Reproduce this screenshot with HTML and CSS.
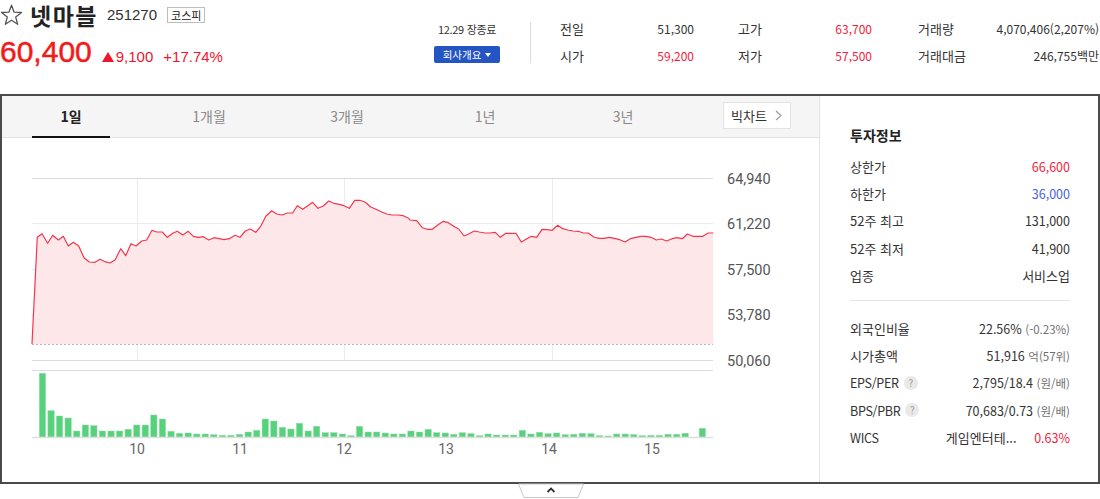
FILE: index.html
```html
<!DOCTYPE html>
<html lang="ko">
<head>
<meta charset="utf-8">
<title>넷마블 251270</title>
<link rel="stylesheet" href="styles.css">
</head>
<body>
<header class="top">
  <div class="stock">
    <div class="title-row">
      <svg class="star" width="23" height="22" viewBox="0 0 23 22"><polygon points="11.5,1.2 14.1,8.2 21.5,8.5 15.7,13.1 17.7,20.3 11.5,16.2 5.3,20.3 7.3,13.1 1.5,8.5 8.9,8.2" fill="none" stroke="#555" stroke-width="1.3" stroke-linejoin="round"/></svg>
      <h1 class="name">넷마블</h1>
      <span class="code">251270</span>
      <span class="market">코스피</span>
    </div>
    <div class="price-row">
      <span class="price">60,400</span>
      <span class="change"><svg class="up" width="12" height="10" viewBox="0 0 12 10"><polygon points="6,0 12,10 0,10" fill="#f0142d"/></svg>9,100</span>
      <span class="rate">+17.74%</span>
    </div>
  </div>
  <div class="status">
    <div class="closed">12.29 장종료</div>
    <button class="company">회사개요 <svg width="6" height="4" viewBox="0 0 6 4"><polygon points="0,0 6,0 3,4" fill="#fff"/></svg></button>
  </div>
  <div class="vdivider"></div>
  <div class="quotes">
    <span class="q-label">전일</span><span class="q-val">51,300</span>
    <span class="q-label gap">고가</span><span class="q-val red">63,700</span>
    <span class="q-label gap2">거래량</span><span class="q-val">4,070,406(2,207%)</span>
    <span class="q-label">시가</span><span class="q-val red">59,200</span>
    <span class="q-label gap">저가</span><span class="q-val red">57,500</span>
    <span class="q-label gap2">거래대금</span><span class="q-val">246,755백만</span>
  </div>
</header>

<section class="board">
  <div class="chart-col">
    <nav class="tabs">
      <a class="tab active">1일</a>
      <a class="tab">1개월</a>
      <a class="tab">3개월</a>
      <a class="tab">1년</a>
      <a class="tab">3년</a>
      <a class="bigchart">빅차트 <svg width="7" height="11" viewBox="0 0 7 11"><polyline points="1,1 6,5.5 1,10" fill="none" stroke="#999" stroke-width="1.1"/></svg></a>
    </nav>
    <svg class="chart" width="817" height="344" viewBox="2 138 817 344">
      <g class="grid-soft">
        <line x1="32" y1="223.5" x2="713" y2="223.5"/>
        <line x1="32" y1="269.5" x2="713" y2="269.5"/>
        <line x1="32" y1="314.5" x2="713" y2="314.5"/>
        <line x1="137.5" y1="178" x2="137.5" y2="360"/>
        <line x1="344.5" y1="178" x2="344.5" y2="360"/>
        <line x1="552.5" y1="178" x2="552.5" y2="360"/>
      </g>
      <polygon class="area" points="32,344 37.3,237.3 42,233.7 47.7,243.3 52.7,235.3 58.3,240 63.3,236.3 68.3,246 73.3,242.3 78.7,246 84,257.7 89.3,262 95,262.3 100,259.3 105,261.7 110,263 115,260 120.7,248.7 125.7,255.7 131,243.7 136,246 141.7,241 146.7,240 152,230.3 156.7,232 162.3,232 167.3,237.3 172.7,233.3 177.3,231.3 182.7,235 188.3,231.3 193.3,236.3 198.3,237.3 203.3,236.7 208.7,240 214,237.7 219,238.7 224,239.7 229.3,238.7 235,235.3 240,237.3 245.3,231 250.3,229 255.7,232.3 260.7,226.3 266,216 271.7,210.7 276.7,214 282,215 287.3,213 292.7,213 297.3,205.7 302.7,209.3 307.7,205.7 312.7,202.3 318,208.3 323.3,206 328.7,201 334,203.3 339.3,204.3 344,205.7 349.3,208.3 354.7,200.3 360,200.3 365.3,202.3 370.7,207 376,209.3 381.3,211.7 386.7,214 392,215 398,215 403.3,215.7 408.7,218.3 410,220 416.7,220.7 422.3,227.7 427.3,229.3 432.3,229.3 437.7,225 443.3,221.3 448.3,222.7 453.7,226.3 458.7,229 464,236 469,233.7 474.3,231 479.3,232 485,233 490,233 495.3,232.3 500.3,237.3 505.7,233.3 510.7,233.3 516,233.3 521.3,242 526,239.3 531.3,236.3 536.7,237.3 542,229.3 547,229.7 552.3,230.3 557.7,225.3 562.7,228.7 567.7,230 573,231 578.3,231.3 583.3,233 588.3,233 593.7,237 599,238.3 604,238.3 609.3,237.3 614.3,238.3 619.7,239.7 625,242 630.3,238.7 635.7,237.3 640.7,236.3 646,236.3 651,237.3 656.3,240 661.3,239 666.7,241 672,238.7 677,237.7 682.3,238.7 687.3,234 692.7,236.3 697.7,236.3 703,236.3 708,233 713.3,233 713.3,344"/>
      <line class="grid-edge" x1="32" y1="178.5" x2="713" y2="178.5"/>
      <line class="grid-edge" x1="32" y1="360.5" x2="713" y2="360.5"/>
      <line class="prev" x1="32" y1="344.5" x2="713" y2="344.5"/>
      <polyline class="line" points="32,344 37.3,237.3 42,233.7 47.7,243.3 52.7,235.3 58.3,240 63.3,236.3 68.3,246 73.3,242.3 78.7,246 84,257.7 89.3,262 95,262.3 100,259.3 105,261.7 110,263 115,260 120.7,248.7 125.7,255.7 131,243.7 136,246 141.7,241 146.7,240 152,230.3 156.7,232 162.3,232 167.3,237.3 172.7,233.3 177.3,231.3 182.7,235 188.3,231.3 193.3,236.3 198.3,237.3 203.3,236.7 208.7,240 214,237.7 219,238.7 224,239.7 229.3,238.7 235,235.3 240,237.3 245.3,231 250.3,229 255.7,232.3 260.7,226.3 266,216 271.7,210.7 276.7,214 282,215 287.3,213 292.7,213 297.3,205.7 302.7,209.3 307.7,205.7 312.7,202.3 318,208.3 323.3,206 328.7,201 334,203.3 339.3,204.3 344,205.7 349.3,208.3 354.7,200.3 360,200.3 365.3,202.3 370.7,207 376,209.3 381.3,211.7 386.7,214 392,215 398,215 403.3,215.7 408.7,218.3 410,220 416.7,220.7 422.3,227.7 427.3,229.3 432.3,229.3 437.7,225 443.3,221.3 448.3,222.7 453.7,226.3 458.7,229 464,236 469,233.7 474.3,231 479.3,232 485,233 490,233 495.3,232.3 500.3,237.3 505.7,233.3 510.7,233.3 516,233.3 521.3,242 526,239.3 531.3,236.3 536.7,237.3 542,229.3 547,229.7 552.3,230.3 557.7,225.3 562.7,228.7 567.7,230 573,231 578.3,231.3 583.3,233 588.3,233 593.7,237 599,238.3 604,238.3 609.3,237.3 614.3,238.3 619.7,239.7 625,242 630.3,238.7 635.7,237.3 640.7,236.3 646,236.3 651,237.3 656.3,240 661.3,239 666.7,241 672,238.7 677,237.7 682.3,238.7 687.3,234 692.7,236.3 697.7,236.3 703,236.3 708,233 713.3,233"/>
      <g class="axis">
        <text x="727" y="184">64,940</text>
        <text x="727" y="229">61,220</text>
        <text x="727" y="275">57,500</text>
        <text x="727" y="320">53,780</text>
        <text x="727" y="366">50,060</text>
      </g>
      <line class="vol-top" x1="32" y1="370.5" x2="713" y2="370.5"/>
      <g class="bars">
        <rect x="39.3" y="373.3" width="6.3" height="63.7"/>
        <rect x="47.9" y="410.7" width="6.3" height="26.3"/>
        <rect x="56.4" y="416" width="6.3" height="21"/>
        <rect x="65" y="418" width="6.3" height="19"/>
        <rect x="73.6" y="431" width="6.3" height="6"/>
        <rect x="82.2" y="425" width="6.3" height="12"/>
        <rect x="90.7" y="425.7" width="6.3" height="11.3"/>
        <rect x="99.3" y="431" width="6.3" height="6"/>
        <rect x="107.9" y="431" width="6.3" height="6"/>
        <rect x="116.4" y="431" width="6.3" height="6"/>
        <rect x="125" y="429.3" width="6.3" height="7.7"/>
        <rect x="133.6" y="425" width="6.3" height="12"/>
        <rect x="142.1" y="425" width="6.3" height="12"/>
        <rect x="150.7" y="415" width="6.3" height="22"/>
        <rect x="159.3" y="419" width="6.3" height="18"/>
        <rect x="167.9" y="431.3" width="6.3" height="5.7"/>
        <rect x="176.4" y="433.3" width="6.3" height="3.7"/>
        <rect x="185" y="433" width="6.3" height="4"/>
        <rect x="193.6" y="434" width="6.3" height="3"/>
        <rect x="202.1" y="434" width="6.3" height="3"/>
        <rect x="210.7" y="434.7" width="6.3" height="2.3"/>
        <rect x="219.3" y="435.3" width="6.3" height="1.7"/>
        <rect x="227.8" y="435.3" width="6.3" height="1.7"/>
        <rect x="236.4" y="434.3" width="6.3" height="2.7"/>
        <rect x="245" y="432" width="6.3" height="5"/>
        <rect x="253.6" y="430.3" width="6.3" height="6.7"/>
        <rect x="262.1" y="419" width="6.3" height="18"/>
        <rect x="270.7" y="421" width="6.3" height="16"/>
        <rect x="279.3" y="427.3" width="6.3" height="9.7"/>
        <rect x="287.8" y="429" width="6.3" height="8"/>
        <rect x="296.4" y="423.3" width="6.3" height="13.7"/>
        <rect x="305" y="431" width="6.3" height="6"/>
        <rect x="313.5" y="426.3" width="6.3" height="10.7"/>
        <rect x="322.1" y="432.7" width="6.3" height="4.3"/>
        <rect x="330.7" y="432.7" width="6.3" height="4.3"/>
        <rect x="339.3" y="434" width="6.3" height="3"/>
        <rect x="347.8" y="435.7" width="6.3" height="1.3"/>
        <rect x="356.4" y="426.3" width="6.3" height="10.7"/>
        <rect x="365" y="432" width="6.3" height="5"/>
        <rect x="373.5" y="432" width="6.3" height="5"/>
        <rect x="382.1" y="433" width="6.3" height="4"/>
        <rect x="390.7" y="434" width="6.3" height="3"/>
        <rect x="399.2" y="434" width="6.3" height="3"/>
        <rect x="407.8" y="431" width="6.3" height="6"/>
        <rect x="416.4" y="432" width="6.3" height="5"/>
        <rect x="425" y="429.3" width="6.3" height="7.7"/>
        <rect x="433.5" y="432.7" width="6.3" height="4.3"/>
        <rect x="442.1" y="433" width="6.3" height="4"/>
        <rect x="450.7" y="434.3" width="6.3" height="2.7"/>
        <rect x="459.2" y="432.7" width="6.3" height="4.3"/>
        <rect x="467.8" y="433.7" width="6.3" height="3.3"/>
        <rect x="476.4" y="435.7" width="6.3" height="1.3"/>
        <rect x="484.9" y="434" width="6.3" height="3"/>
        <rect x="493.5" y="435" width="6.3" height="2"/>
        <rect x="502.1" y="435" width="6.3" height="2"/>
        <rect x="510.6" y="435" width="6.3" height="2"/>
        <rect x="519.2" y="430.3" width="6.3" height="6.7"/>
        <rect x="527.8" y="434" width="6.3" height="3"/>
        <rect x="536.4" y="432.3" width="6.3" height="4.7"/>
        <rect x="544.9" y="433.7" width="6.3" height="3.3"/>
        <rect x="553.5" y="433" width="6.3" height="4"/>
        <rect x="562.1" y="434.7" width="6.3" height="2.3"/>
        <rect x="570.6" y="434.3" width="6.3" height="2.7"/>
        <rect x="579.2" y="433.3" width="6.3" height="3.7"/>
        <rect x="587.8" y="433.7" width="6.3" height="3.3"/>
        <rect x="596.3" y="435.7" width="6.3" height="1.3"/>
        <rect x="604.9" y="436" width="6.3" height="1"/>
        <rect x="613.5" y="434" width="6.3" height="3"/>
        <rect x="622.1" y="434" width="6.3" height="3"/>
        <rect x="630.6" y="434.7" width="6.3" height="2.3"/>
        <rect x="639.2" y="435.7" width="6.3" height="1.3"/>
        <rect x="647.8" y="435.3" width="6.3" height="1.7"/>
        <rect x="656.3" y="435.3" width="6.3" height="1.7"/>
        <rect x="664.9" y="434.3" width="6.3" height="2.7"/>
        <rect x="673.5" y="434.3" width="6.3" height="2.7"/>
        <rect x="682" y="433.3" width="6.3" height="3.7"/>
        <rect x="699.2" y="428.3" width="6.3" height="8.7"/>
      </g>
      <line class="vol-base" x1="32" y1="437.5" x2="713" y2="437.5"/>
      <g class="axis xaxis">
        <text x="137" y="454">10</text>
        <text x="240" y="454">11</text>
        <text x="344" y="454">12</text>
        <text x="446" y="454">13</text>
        <text x="549" y="454">14</text>
        <text x="652" y="454">15</text>
      </g>
    </svg>
  </div>

  <aside class="info">
    <h2 class="info-title">투자정보</h2>
    <ul class="info-list">
      <li><span>상한가</span><span class="num red">66,600</span></li>
      <li><span>하한가</span><span class="num blue">36,000</span></li>
      <li><span>52주 최고</span><span class="num">131,000</span></li>
      <li><span>52주 최저</span><span class="num">41,900</span></li>
      <li><span>업종</span><span>서비스업</span></li>
    </ul>
    <ul class="info-list second">
      <li><span>외국인비율</span><span class="num">22.56% <small>(-0.23%)</small></span></li>
      <li><span>시가총액</span><span class="num">51,916 <small>억(57위)</small></span></li>
      <li><span class="eng">EPS/PER <i class="help">?</i></span><span class="num">2,795/18.4 <small>(원/배)</small></span></li>
      <li><span class="eng">BPS/PBR <i class="help">?</i></span><span class="num">70,683/0.73 <small>(원/배)</small></span></li>
      <li><span class="eng">WICS</span><span class="wics">게임엔터테... <span class="num red">0.63%</span></span></li>
    </ul>
  </aside>

  <div class="handle"><svg width="66" height="15" viewBox="0 0 66 15"><polygon points="0.5,1 65.5,1 60,14.5 6,14.5" fill="#fff" stroke="#c9c9c9"/><polyline points="29.5,9 33,5.5 36.5,9" fill="none" stroke="#333" stroke-width="1.8"/></svg></div>
</section>
</body>
</html>
```

FILE: styles.css
```css
* { box-sizing: border-box; }
html, body { margin: 0; padding: 0; }
body {
  width: 1100px;
  min-height: 499px;
  font-family: "Noto Sans CJK KR", "Liberation Sans", sans-serif;
  color: #333;
  background: #fff;
}

/* header */
.top {
  display: flex;
  height: 94px;
}
.stock { width: 434px; }
.title-row {
  display: flex;
  align-items: center;
  height: 30px;
}
.star { display: block; }
.name {
  margin: 0 0 0 7px;
  font-size: 23px;
  font-weight: bold;
  letter-spacing: 1.5px;
  line-height: 30px;
  color: #222;
}
.code {
  margin-left: 9px;
  font-family: "Liberation Sans", sans-serif;
  font-size: 15px;
  color: #333;
  line-height: 30px;
}
.market {
  margin-left: 10px;
  height: 16px;
  padding: 0 3px;
  border: 1px solid #bdbdbd;
  font-size: 11px;
  line-height: 14px;
  color: #222;
}
.price-row {
  display: flex;
  align-items: baseline;
  height: 44px;
  line-height: 44px;
}
.price {
  font-family: "Liberation Sans", sans-serif;
  font-size: 30px;
  color: #f21b1b;
  -webkit-text-stroke: 0.5px #f21b1b;
}
.change, .rate {
  font-family: "Liberation Sans", sans-serif;
  font-size: 15px;
  color: #f0142d;
}
.change { margin-left: 10px; }
.change .up { margin-right: 2px; vertical-align: 0; }
.rate { margin-left: 10px; }

.status {
  width: 66px;
  padding-top: 22px;
  text-align: center;
}
.closed {
  font-size: 11px;
  line-height: 14px;
  color: #333;
  letter-spacing: -0.3px;
  white-space: nowrap;
}
.company {
  display: flex;
  align-items: center;
  justify-content: center;
  gap: 4px;
  width: 66px;
  height: 17px;
  margin-top: 10px;
  padding: 0;
  border: 0;
  border-radius: 2px;
  background: #2455c3;
  color: #fff;
  font-family: "Noto Sans CJK KR", sans-serif;
  font-size: 10.5px;
  line-height: 17px;
}
.vdivider {
  width: 1px;
  height: 41px;
  margin: 22px 0 0 30px;
  background: #dcdcdc;
}
.quotes {
  display: grid;
  grid-template-columns: 60px 74px 104px 74px 106px 121px;
  grid-auto-rows: 27px;
  align-items: center;
  margin: 15px 0 0 29px;
  font-size: 13px;
  height: 54px;
}
.q-label { color: #333; white-space: nowrap; }
.q-label.gap { padding-left: 44px; }
.q-label.gap2 { padding-left: 46px; }
.q-val {
  text-align: right;
  font-size: 12px;
  color: #333;
  white-space: nowrap;
}
.red { color: #f3213b; }
.blue { color: #4a62dd; }

/* board */
.board {
  position: relative;
  display: flex;
  height: 390px;
  border: 2px solid #4a4a4a;
}
.chart-col {
  width: 818px;
  border-right: 1px solid #e3e3e3;
}
.tabs {
  display: flex;
  height: 42px;
  background: #f5f5f5;
  border-bottom: 1px solid #e3e3e3;
}
.tab {
  position: relative;
  width: 138px;
  text-align: center;
  font-size: 14px;
  line-height: 41px;
  color: #8a8a8a;
}
.tab.active {
  color: #222;
  font-weight: bold;
}
.tab.active::after {
  content: "";
  position: absolute;
  left: 30px;
  right: 30px;
  bottom: -1px;
  height: 2px;
  background: #111;
}
.bigchart {
  display: flex;
  align-items: center;
  gap: 8px;
  height: 27px;
  margin: 6px 0 0 31px;
  padding: 0 8px 0 7px;
  background: #fff;
  border: 1px solid #e3e3e3;
  font-size: 13px;
  color: #333;
}
.chart { display: block; }
.grid-soft line { stroke: #ececec; stroke-width: 1; }
.grid-edge { stroke: #d6dce4; stroke-width: 1; }
.area { fill: #fde7e9; }
.line { fill: none; stroke: #f3364b; stroke-width: 1.2; stroke-linejoin: round; }
.prev { stroke: #b9b6c2; stroke-width: 1; stroke-dasharray: 2 2; }
.axis text {
  font-family: Roboto, "Liberation Sans", sans-serif;
  font-size: 14.5px;
  fill: #555;
}
.xaxis text { text-anchor: middle; fill: #666; font-size: 14px; }
.vol-top { stroke: #dddbea; stroke-width: 1; }
.vol-base { stroke: #dedede; stroke-width: 1.5; }
.bars rect { fill: #58d17c; stroke: #8ee0a6; stroke-width: 0.5; }

/* info */
.info {
  flex: 1;
  padding: 29px 28px 0 30px;
}
.info-title {
  margin: 0;
  font-size: 14px;
  font-weight: bold;
  line-height: 20px;
  color: #222;
}
.info-list {
  list-style: none;
  margin: 7.5px 0 0;
  padding: 0 0 11px;
  border-bottom: 1px solid #e5e5e5;
}
.info-list.second {
  margin-top: 13.5px;
  padding: 0;
  border-bottom: 0;
}
.info-list li {
  display: flex;
  justify-content: space-between;
  align-items: center;
  height: 27.3px;
  font-size: 13px;
  color: #333;
  white-space: nowrap;
}
.num { font-size: 12.5px; }
.num small { font-size: 11.5px; color: #6f6f6f; }
.eng { font-size: 12.5px; letter-spacing: -0.3px; display: flex; align-items: center; }
.help {
  display: inline-block;
  width: 14px;
  height: 14px;
  margin-left: 5px;
  border-radius: 50%;
  background: #e9e9e9;
  color: #9a9a9a;
  font-style: normal;
  font-size: 10px;
  line-height: 14px;
  text-align: center;
}
.wics .num { margin-left: 14px; }

.handle {
  position: absolute;
  z-index: 2;
  left: 516px;
  top: 387px;
  width: 66px;
  height: 15px;
}
.handle svg { display: block; }
```
